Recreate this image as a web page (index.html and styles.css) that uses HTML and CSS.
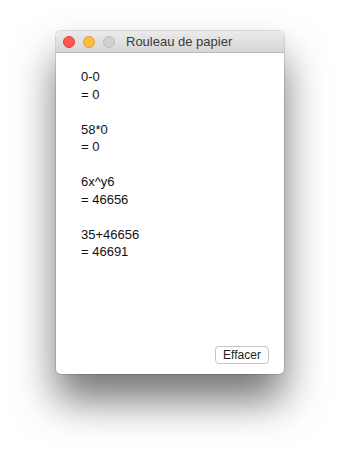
FILE: index.html
```html
<!DOCTYPE html>
<html lang="fr">
<head>
    <meta charset="UTF-8">
    <title>Rouleau de papier</title>
    <link rel="stylesheet" href="styles.css">
</head>
<body>
    <div class="window">
        <div class="titlebar">
            <div class="lights">
                <span class="light red"></span>
                <span class="light yellow"></span>
                <span class="light gray"></span>
            </div>
            <div class="title">Rouleau de papier</div>
        </div>
        <div class="content">
            <div class="tape">
                <div>0-0</div>
                <div>= 0</div>
                <div>&nbsp;</div>
                <div>58*0</div>
                <div>= 0</div>
                <div>&nbsp;</div>
                <div>6x^y6</div>
                <div>= 46656</div>
                <div>&nbsp;</div>
                <div>35+46656</div>
                <div>= 46691</div>
            </div>
            <div class="actions">
                <button class="btn">Effacer</button>
            </div>
        </div>
    </div>
</body>
</html>
```

FILE: styles.css
```css
* {
    margin: 0;
    padding: 0;
    box-sizing: border-box;
}

body {
    font-family: 'Liberation Sans', Arial, sans-serif;
    background: #fff;
    padding: 31px 0 0 56px;
    width: 339px;
    height: 454px;
    overflow: hidden;
}

.window {
    width: 228px;
    height: 343px;
    border-radius: 5px;
    background: #fff;
    display: flex;
    flex-direction: column;
    box-shadow: 0 0 0 1px rgba(0, 0, 0, 0.12), 0 26px 42px rgba(0, 0, 0, 0.55);
    overflow: hidden;
}

.titlebar {
    height: 22px;
    background: linear-gradient(#ebebeb, #d6d6d6);
    border-bottom: 1px solid #b8b8b8;
    display: flex;
    align-items: center;
    padding-left: 7px;
}

.lights {
    display: flex;
    gap: 8px;
}

.light {
    width: 12px;
    height: 12px;
    border-radius: 50%;
    display: block;
}

.red { background: #fc5753; border: 1px solid #df3e3a; }
.yellow { background: #fdbc40; border: 1px solid #de9f34; }
.gray { background: #d0d0d0; border: 1px solid #bdbdbd; }

.title {
    margin-left: 11px;
    font-size: 13px;
    color: #3a3a3a;
}

.content {
    flex: 1;
    display: flex;
    flex-direction: column;
    padding: 15px 15px 10px 25px;
}

.tape {
    flex: 1;
    font-size: 13px;
    line-height: 17.5px;
    color: #111;
}

.actions {
    display: flex;
    justify-content: flex-end;
}

.btn {
    font-family: inherit;
    font-size: 12px;
    color: #222;
    background: #fff;
    border: 1px solid #c6c6c6;
    border-radius: 4px;
    padding: 0 6px 1px;
    height: 18px;
    width: 54px;
}
```
